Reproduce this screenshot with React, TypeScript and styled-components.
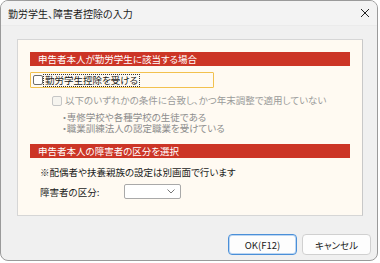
import React from "react";
import styled, { createGlobalStyle } from "styled-components";

const Global = createGlobalStyle`
  html, body { margin: 0; padding: 0; background: #ffffff; }
  body {
    font-family: "Noto Sans CJK JP", "Noto Sans", sans-serif;
    font-feature-settings: "palt";
    -webkit-font-smoothing: antialiased;
  }
`;

const Window = styled.div`
  box-sizing: border-box;
  width: 378px;
  height: 261px;
  border: 1px solid #9a9a9a;
  border-radius: 8px;
  background: #f0f0f0;
  overflow: hidden;
  display: flex;
  flex-direction: column;
`;

const TitleBar = styled.div`
  height: 24px;
  flex: none;
  display: flex;
  align-items: center;
  justify-content: space-between;
  padding: 0 6px 0 7px;
  background: #f3f3f3;
  border-bottom: 1px solid #ebebeb;
  font-size: 10px;
  color: #1b1b1b;
`;

const Title = styled.span`
  line-height: 1;
  margin-top: 1px;
`;

const CloseBtn = styled.div`
  width: 12px;
  height: 12px;
  display: flex;
  align-items: center;
  justify-content: center;
`;

const Client = styled.div`
  flex: 1;
  display: flex;
  flex-direction: column;
  padding: 13px 14px 0 16px;
`;

const Panel = styled.div`
  box-sizing: border-box;
  width: 346px;
  height: 177px;
  background: #fffaf2;
  border: 1px solid #d6d6d6;
  border-right-color: #c8c8c8;
  padding: 12px 12px 0 12px;
  display: flex;
  flex-direction: column;
`;

const SectionHeader = styled.div<{ $mt?: number }>`
  height: 14px;
  margin-top: ${(p) => p.$mt ?? 0}px;
  background: #cc3526;
  color: #ffffff;
  font-size: 9.5px;
  line-height: 14px;
  padding-left: 8px;
  white-space: nowrap;
`;

const FocusRow = styled.div`
  box-sizing: border-box;
  margin-top: 6px;
  width: 184px;
  height: 16px;
  border: 1px solid #f2c14e;
  border-radius: 1px;
  display: flex;
  align-items: center;
  padding-left: 2px;
  gap: 1px;
`;

const Box = styled.span<{ $disabled?: boolean }>`
  box-sizing: border-box;
  width: 10px;
  height: 10px;
  flex: none;
  border: 1px solid ${(p) => (p.$disabled ? "#c6c6c6" : "#6e6e6e")};
  border-radius: 2px;
  background: ${(p) => (p.$disabled ? "#f6f4ef" : "#ffffff")};
`;

const FocusLabel = styled.span`
  font-size: 9.5px;
  line-height: 11px;
  color: #1a1a1a;
  outline: 1px dotted #333;
  outline-offset: 0;
  padding: 0 1px;
  white-space: nowrap;
`;

const DisabledRow = styled.div`
  margin-top: 7px;
  margin-left: 22px;
  display: flex;
  align-items: center;
  gap: 3px;
`;

const DisabledText = styled.span`
  font-size: 9.5px;
  line-height: 11px;
  color: #9a9a9a;
  white-space: nowrap;
`;

const BulletList = styled.div`
  margin-top: 6px;
  margin-left: 32px;
  display: flex;
  flex-direction: column;
`;

const Bullet = styled.div`
  font-size: 9.5px;
  line-height: 11px;
  color: #8c8c8c;
  white-space: nowrap;
`;

const Note = styled.div`
  margin-top: 7px;
  padding-left: 10px;
  font-size: 9.5px;
  line-height: 14px;
  color: #1a1a1a;
  white-space: nowrap;
`;

const FieldRow = styled.div`
  margin-top: 5px;
  padding-left: 10px;
  display: flex;
  align-items: center;
  height: 15px;
`;

const FieldLabel = styled.span`
  width: 84px;
  font-size: 9.5px;
  color: #1a1a1a;
  white-space: nowrap;
`;

const Select = styled.div`
  box-sizing: border-box;
  width: 57px;
  height: 15px;
  background: #ffffff;
  border: 1px solid #a9a9a9;
  border-radius: 2px;
  display: flex;
  align-items: center;
  justify-content: flex-end;
  padding-right: 5px;
`;

const ButtonBar = styled.div`
  display: flex;
  justify-content: flex-end;
  gap: 5px;
  margin-top: 18px;
  margin-right: -8px;
`;

const Button = styled.div<{ $primary?: boolean }>`
  box-sizing: border-box;
  width: 69px;
  height: 21px;
  border-radius: 4px;
  background: #fdfdfd;
  border: 1px solid ${(p) => (p.$primary ? "#4a8fd8" : "#d0d0d0")};
  box-shadow: ${(p) => (p.$primary ? "inset 0 0 0 1px #bcd6f2" : "none")};
  display: flex;
  align-items: center;
  justify-content: center;
  font-size: 9.5px;
  color: #1a1a1a;
`;

export default function App() {
  return (
    <>
      <Global />
      <Window>
        <TitleBar>
          <Title>勤労学生、障害者控除の入力</Title>
          <CloseBtn>
            <svg width="10" height="10" viewBox="0 0 10 10">
              <path d="M1 1 L9 9 M9 1 L1 9" stroke="#222" strokeWidth="1" />
            </svg>
          </CloseBtn>
        </TitleBar>
        <Client>
          <Panel>
            <SectionHeader>申告者本人が勤労学生に該当する場合</SectionHeader>
            <FocusRow>
              <Box />
              <FocusLabel>勤労学生控除を受ける</FocusLabel>
            </FocusRow>
            <DisabledRow>
              <Box $disabled />
              <DisabledText>以下のいずれかの条件に合致し、かつ年末調整で適用していない</DisabledText>
            </DisabledRow>
            <BulletList>
              <Bullet>・専修学校や各種学校の生徒である</Bullet>
              <Bullet>・職業訓練法人の認定職業を受けている</Bullet>
            </BulletList>
            <SectionHeader $mt={10}>申告者本人の障害者の区分を選択</SectionHeader>
            <Note>※配偶者や扶養親族の設定は別画面で行います</Note>
            <FieldRow>
              <FieldLabel>障害者の区分:</FieldLabel>
              <Select>
                <svg width="8" height="5" viewBox="0 0 8 5">
                  <path d="M0.5 0.5 L4 4 L7.5 0.5" stroke="#777" strokeWidth="1" fill="none" />
                </svg>
              </Select>
            </FieldRow>
          </Panel>
          <ButtonBar>
            <Button $primary>OK(F12)</Button>
            <Button>キャンセル</Button>
          </ButtonBar>
        </Client>
      </Window>
    </>
  );
}
